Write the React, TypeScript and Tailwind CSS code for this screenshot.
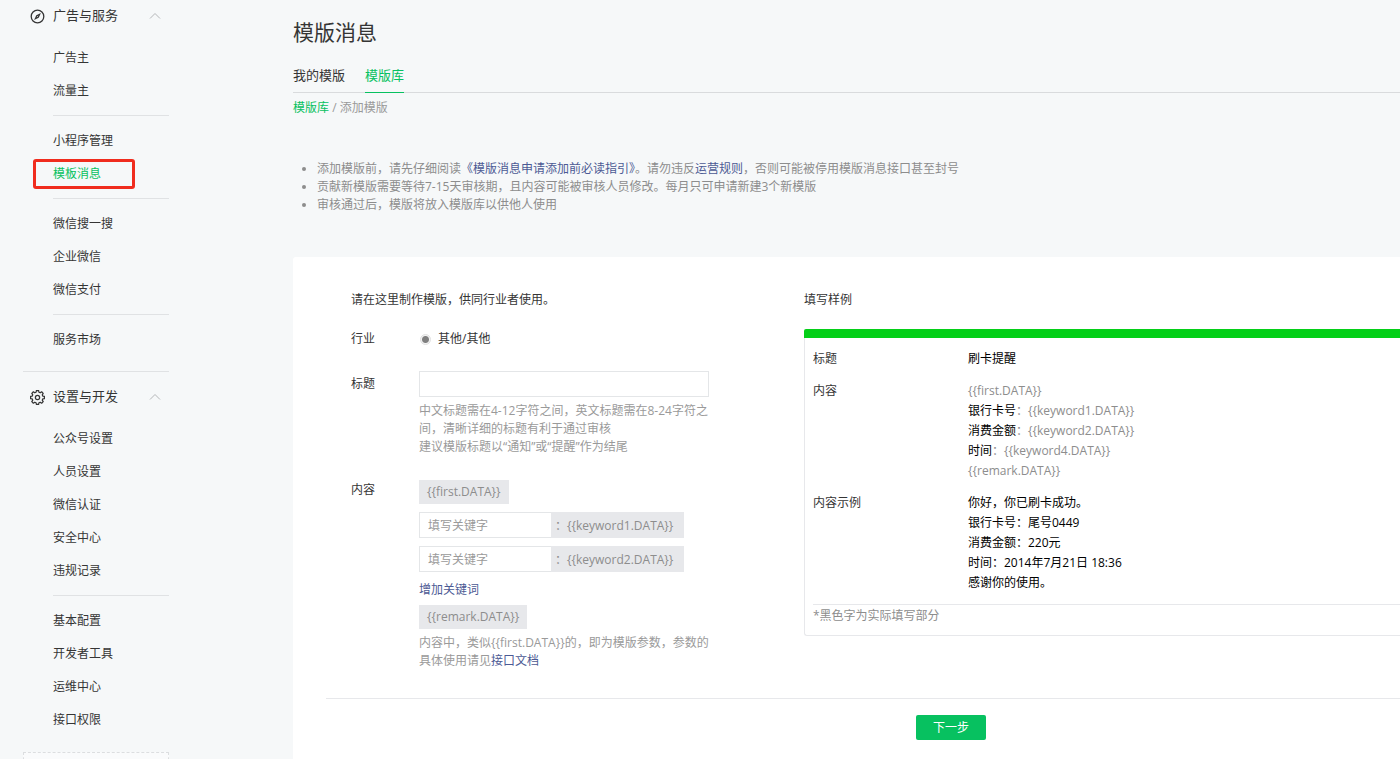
import type { ReactNode } from "react";

type MenuSection = {
  title: string;
  icon: ReactNode;
  groups: string[][];
};

const CompassIcon = () => (
  <svg width="15" height="15" viewBox="0 0 15 15" fill="none" aria-hidden="true">
    <circle cx="7.5" cy="7.5" r="6.3" stroke="#353535" strokeWidth="1.3" />
    <path d="M10.9 4.1 8.7 8.7 4.1 10.9 6.3 6.3Z" fill="#353535" />
    <path d="M6.9 8.1 8.1 6.9" stroke="#f6f8f9" strokeWidth="0.7" />
  </svg>
);

const GearIcon = () => (
  <svg width="15" height="15" viewBox="0 0.9 24 24" fill="none" stroke="#353535" strokeWidth="2" strokeLinejoin="round" aria-hidden="true">
    <path d="M10.2 1.8h3.6l.5 2.7 2 .8 2.3-1.5 2.5 2.5-1.5 2.3.8 2 2.7.5v3.6l-2.7.5-.8 2 1.5 2.3-2.5 2.5-2.3-1.5-2 .8-.5 2.7h-3.6l-.5-2.7-2-.8-2.3 1.5-2.5-2.5 1.5-2.3-.8-2-2.7-.5v-3.6l2.7-.5.8-2-1.5-2.3 2.5-2.5 2.3 1.5 2-.8z" />
    <circle cx="12" cy="12.9" r="3.4" />
  </svg>
);

const ChevronUp = () => (
  <svg width="12" height="8" viewBox="0 0 12 8" fill="none" aria-hidden="true">
    <path d="M1 6.5 6 1.5 11 6.5" stroke="#b5b7b9" />
  </svg>
);

const sections: MenuSection[] = [
  {
    title: "广告与服务",
    icon: <CompassIcon />,
    groups: [
      ["广告主", "流量主"],
      ["小程序管理", "模板消息"],
      ["微信搜一搜", "企业微信", "微信支付"],
      ["服务市场"],
    ],
  },
  {
    title: "设置与开发",
    icon: <GearIcon />,
    groups: [
      ["公众号设置", "人员设置", "微信认证", "安全中心", "违规记录"],
      ["基本配置", "开发者工具", "运维中心", "接口权限"],
    ],
  },
];

const current = "模板消息";

function Sidebar() {
  return (
    <aside className="w-[293px] shrink-0 pl-[23px]">
      <nav className="w-[146px]">
        {sections.map((section, i) => (
          <section key={section.title} className={i === 0 ? "pb-[15px]" : "border-t border-[#e0e2e4] pt-[9px] pb-4"}>
            <button type="button" className="mb-[9px] flex h-8 w-full items-center pl-[7px] pr-2 text-[13px] text-[#353535]">
              {section.icon}
              <span className="ml-2">{section.title}</span>
              <span className="ml-auto">
                <ChevronUp />
              </span>
            </button>
            {section.groups.map((group, g) => (
              <ul key={group[0]} className={g === 0 ? "ml-[30px]" : "ml-[30px] mt-2 border-t border-[#e0e2e4] pt-2"}>
                {group.map((item) => (
                  <li key={item} className="relative h-[33px] leading-[33px]">
                    <a href="#" className={item === current ? "text-[#07c160]" : "text-[#353535]"}>
                      {item}
                    </a>
                    {item === current && (
                      <span className="pointer-events-none absolute -left-5 top-0.5 h-[30px] w-[102px] rounded-[3px] border-[3px] border-[#f02c1e]" />
                    )}
                  </li>
                ))}
              </ul>
            ))}
          </section>
        ))}
        <div className="h-10 border border-dashed border-[#dcdee0] bg-[#fafbfc]" />
      </nav>
    </aside>
  );
}

function Chip({ children }: { children: ReactNode }) {
  return <span className="block h-6 w-fit bg-[#e7e8eb] px-2 leading-6 text-[#8d8d8d]">{children}</span>;
}

function KeywordRow({ name }: { name: string }) {
  return (
    <div className="mt-2 flex h-[26px]">
      <input
        type="text"
        aria-label={name}
        placeholder="填写关键字"
        className="w-[132px] border border-r-0 border-[#e4e6e8] bg-white px-2 pt-0.5 placeholder:text-[#9a9a9a] focus:outline-none"
      />
      <span className="w-[133px] whitespace-nowrap bg-[#e7e8eb] pl-1 leading-[27px] text-[#8d8d8d]">
        ：{`{{${name}.DATA}}`}
      </span>
    </div>
  );
}

function TemplateForm() {
  return (
    <div className="w-[453px] shrink-0 leading-5">
      <h2>请在这里制作模版，供同行业者使用。</h2>

      <div className="mt-[19px] flex">
        <span className="w-[68px]">行业</span>
        <label className="flex items-center gap-1.5">
          <input
            type="radio"
            name="industry"
            defaultChecked
            className="m-px size-[11px] appearance-none rounded-full border border-[#e0e0e0] bg-white bg-[radial-gradient(circle,#808080_3px,#f4f4f4_4px)]"
          />
          其他/其他
        </label>
      </div>

      <div className="mt-[22px] flex">
        <label htmlFor="title" className="w-[68px] leading-[26px]">
          标题
        </label>
        <div>
          <input id="title" type="text" className="block h-[26px] w-[290px] border border-[#e4e6e8] bg-white px-2 focus:outline-none" />
          <p className="mt-[5px] whitespace-nowrap leading-[18px] text-[#9a9a9a]">
            中文标题需在4-12字符之间，英文标题需在8-24字符之
            <br />
            间，清晰详细的标题有利于通过审核
            <br />
            建议模版标题以“通知”或“提醒”作为结尾
          </p>
        </div>
      </div>

      <div className="mt-6 flex">
        <span className="w-[68px]">内容</span>
        <div>
          <Chip>{"{{first.DATA}}"}</Chip>
          <KeywordRow name="keyword1" />
          <KeywordRow name="keyword2" />
          <button type="button" className="mt-2 block leading-5 text-[#4c5a94]">
            增加关键词
          </button>
          <div className="mt-[5px]">
            <Chip>{"{{remark.DATA}}"}</Chip>
          </div>
          <p className="mt-[5px] whitespace-nowrap leading-[18px] text-[#9a9a9a]">
            内容中，类似{"{{first.DATA}}"}的，即为模版参数，参数的
            <br />
            具体使用请见
            <a href="#" className="text-[#4c5a94]">
              接口文档
            </a>
          </p>
        </div>
      </div>
    </div>
  );
}

function SampleRow({ label, children }: { label: string; children: ReactNode }) {
  return (
    <div className="flex">
      <dt className="w-[155px] shrink-0">{label}</dt>
      <dd className="text-black">{children}</dd>
    </div>
  );
}

function Param({ children }: { children: ReactNode }) {
  return <span className="text-[#8d8d8d]">{children}</span>;
}

function Sample() {
  return (
    <div className="min-w-0 flex-1 leading-5">
      <h2>填写样例</h2>
      <div className="mt-[19px] h-[9px] rounded-tl-[2px] bg-[#04cf18]" />
      <div className="rounded-bl-[3px] border-b border-l border-[#e7e8eb] pl-2 pt-[11px] pb-[9px]">
        <dl className="flex flex-col gap-3">
          <SampleRow label="标题">刷卡提醒</SampleRow>
          <SampleRow label="内容">
            <p><Param>{"{{first.DATA}}"}</Param></p>
            <p>银行卡号<Param>：{"{{keyword1.DATA}}"}</Param></p>
            <p>消费金额<Param>：{"{{keyword2.DATA}}"}</Param></p>
            <p>时间<Param>：{"{{keyword4.DATA}}"}</Param></p>
            <p><Param>{"{{remark.DATA}}"}</Param></p>
          </SampleRow>
          <SampleRow label="内容示例">
            <p>你好，你已刷卡成功。</p>
            <p>银行卡号：尾号0449</p>
            <p>消费金额：220元</p>
            <p>时间：2014年7月21日 18:36</p>
            <p>感谢你的使用。</p>
          </SampleRow>
        </dl>
        <p className="mt-[11px] border-t border-[#e7e8eb] pt-px text-[#8d8d8d]">*黑色字为实际填写部分</p>
      </div>
    </div>
  );
}

export default function App() {
  return (
    <div className="flex h-screen overflow-hidden bg-[#f6f8f9] font-['Open_Sans','Noto_Sans_CJK_SC',sans-serif] text-[12px] text-[#353535]">
      <Sidebar />
      <main className="flex min-w-0 flex-1 flex-col pt-4">
        <h1 className="text-[21px] leading-8">模版消息</h1>
        <nav className="mt-[9px] flex h-9 shrink-0 gap-5 border-b border-[#d9dbdd] text-[13px] leading-9">
          <a href="#" className="h-9">我的模版</a>
          <a href="#" className="h-9 border-b border-[#07c160] text-[#07c160]">模版库</a>
        </nav>
        <p className="mt-[5px] leading-5 text-[#9a9a9a]">
          <a href="#" className="text-[#07c160]">模版库</a> / 添加模版
        </p>
        <ul className="mt-[42px] list-disc pl-6 leading-[18px] text-[#8d8d8d]">
          <li>
            添加模版前，请先仔细阅读
            <a href="#" className="text-[#4c5a94]">《模版消息申请添加前必读指引》</a>
            。请勿违反
            <a href="#" className="text-[#4c5a94]">运营规则</a>
            ，否则可能被停用模版消息接口甚至封号
          </li>
          <li>贡献新模版需要等待7-15天审核期，且内容可能被审核人员修改。每月只可申请新建3个新模版</li>
          <li>审核通过后，模版将放入模版库以供他人使用</li>
        </ul>

        <form className="mt-[43px] flex-1 overflow-hidden rounded-tl-[3px] bg-white pt-[33px]" onSubmit={(e) => e.preventDefault()}>
          <div className="flex pl-[58px]">
            <TemplateForm />
            <Sample />
          </div>
          {/* the action bar keeps its full desktop width */}
          <div className="ml-[33px] mt-7 flex min-w-[1250px] justify-center border-t border-[#e7e8eb] pt-4">
            <button type="submit" className="h-[25px] w-[70px] rounded-[2px] bg-[#07c160] text-white">
              下一步
            </button>
          </div>
        </form>
      </main>
    </div>
  );
}
